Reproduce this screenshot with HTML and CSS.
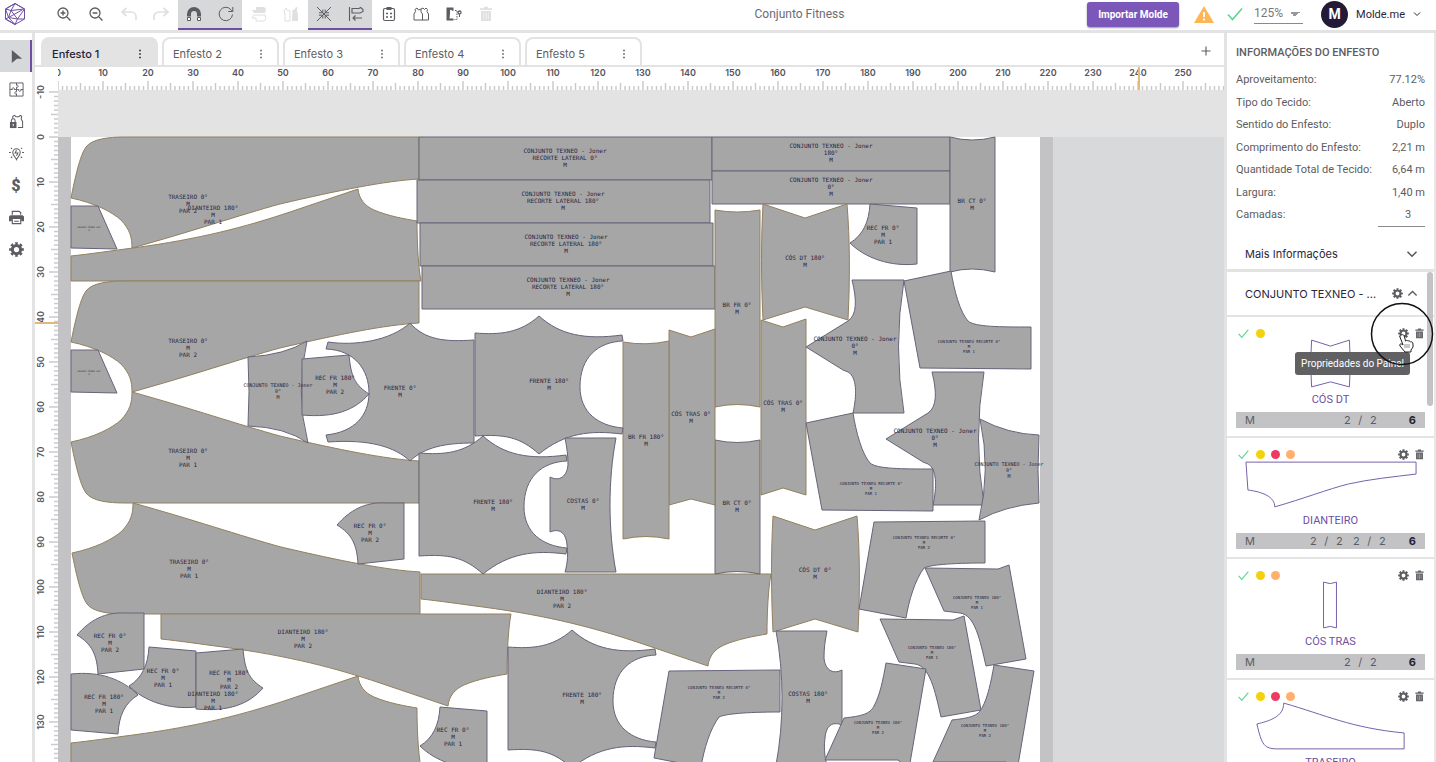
FILE: index.html
```html
<!DOCTYPE html>
<html lang="pt-BR">
<head>
  <meta charset="UTF-8" />
  <meta name="viewport" content="width=device-width, initial-scale=1.0" />
  <title>Molde.me - Conjunto Fitness</title>
  <link rel="stylesheet" href="styles.css">
</head>
<body>
  <svg class="sprite" aria-hidden="true">
    <symbol id="zoom-in" viewBox="0 0 16 16"><circle cx="7" cy="7" r="5" fill="none" stroke="currentColor" stroke-width="1.3"/><path d="M11 11l3.500 3.500M4.600 7h4.800M7 4.600v4.800" stroke="currentColor" stroke-width="1.400"/></symbol>
    <symbol id="zoom-out" viewBox="0 0 16 16"><circle cx="7" cy="7" r="5" fill="none" stroke="currentColor" stroke-width="1.300"/><path d="M11 11l3.500 3.500M4.600 7h4.800" stroke="currentColor" stroke-width="1.400"/></symbol>
    <symbol id="undo" viewBox="0 0 16 16"><path d="M5.500 2L1 6l4.500 4M1.500 6H10c3 0 5 2 5 4.500V14" fill="none" stroke="currentColor" stroke-width="1.700"/></symbol>
    <symbol id="redo" viewBox="0 0 16 16"><path d="M10.500 2L15 6l-4.500 4M14.500 6H6c-3 0-5 2-5 4.500V14" fill="none" stroke="currentColor" stroke-width="1.700"/></symbol>
    <symbol id="magnet" viewBox="0 0 16 16"><path d="M3 10.500V8a5 5 0 0 1 10 0v2.500" fill="none" stroke="currentColor" stroke-width="4"/><path d="M1.500 11.500h3v3h-3zM11.500 11.500h3v3h-3z" fill="#fff" stroke="currentColor"/></symbol>
    <symbol id="rotate" viewBox="0 0 16 16"><path d="M14.500 8.500A6.700 6.700 0 1 1 12.800 3.500L14.500 5.300M14.800 1v4.500H10.300" fill="none" stroke="currentColor" stroke-width="1"/></symbol>
    <symbol id="flip-v" viewBox="0 0 16 16"><path d="M5 1h8l2 2-1 4H3L1 4h4z" fill="currentColor"/><path d="M5 15h8l2-2-1-4H3l-2 3h4z" fill="none" stroke="currentColor"/></symbol>
    <symbol id="flip-h" viewBox="0 0 16 16"><path d="M7 15H2V8L1 5l2-3 1 2 3 1z" fill="none" stroke="currentColor"/><path d="M9 15h6V8l-1-3 .500-4-2 .500-1 2-2 .500z" fill="currentColor"/></symbol>
    <symbol id="collapse" viewBox="0 0 16 16"><path d="M1 1l14 14M15 1L1 15" stroke="currentColor" stroke-width="1"/><path d="M6.800 3.500v3.300H3M9.200 3.500v3.300H13M6.800 12.500V9.200H3M9.200 12.500V9.200H13" fill="none" stroke="currentColor" stroke-width="1"/></symbol>
    <symbol id="align" viewBox="0 0 16 16"><path d="M1.500 1v14M4 2.500h7l1.500-1 2.500 2v2l-3 1.500H4zM5 12h9M7.500 9.500L5 12l2.500 2.500" fill="none" stroke="currentColor" stroke-width="1.100"/></symbol>
    <symbol id="clipboard" viewBox="0 0 16 16"><rect x="2.500" y="2.500" width="11" height="12" rx="1.500" fill="none" stroke="currentColor" stroke-width="1.200"/><path d="M5.500 1h5v3h-5z" fill="currentColor"/><path d="M5 7.500h2M5 11h2M9 7.500h2M9 11h2" stroke="currentColor" stroke-width="1.500"/></symbol>
    <symbol id="vests" viewBox="0 0 16 16"><path d="M1 14V8l1.500-2.500-.500-2 2-1.500 1.500 2L8 3l2-1 1.500 1.500L13 2l1.500 1.500-.500 2L15.500 8v6zM8 3v3l1.500 2v6" fill="none" stroke="currentColor" stroke-width="1"/></symbol>
    <symbol id="mirror" viewBox="0 0 16 16"><path d="M.500 1.500H7.500v13H.500zM3.500 12.500h4V5l-1.500-.500-1-1-1 1v3z" fill="currentColor" fill-rule="evenodd"/><path d="M9 4.500h2v9H8.500" fill="none" stroke="currentColor" stroke-dasharray="1.500 1"/><circle cx="13.500" cy="6.500" r="1.500" fill="none" stroke="currentColor" stroke-width="1.300"/><path d="M13.500 8v3" stroke="currentColor"/></symbol>
    <symbol id="trash" viewBox="0 0 16 16"><path d="M6 .800h4v1.400h4v1.800H2V2.200h4zM3 5h10v10H3z" fill="currentColor"/><path d="M5.700 6.500v7M8 6.500v7M10.300 6.500v7" stroke="#fff" stroke-opacity=".6" stroke-width=".9"/></symbol>
    <symbol id="pointer" viewBox="0 0 16 16"><path d="M3 1l11 9.500H8.500L3 15z" fill="currentColor"/></symbol>
    <symbol id="puzzle" viewBox="0 0 16 16"><path d="M1 1h14v14H1zM8 1v2.500c2.500-1 2.500 3 0 2V8M8 15v-2.500c-2.500 1-2.500-3 0-2V8M1 8h2.500c-1-2.500 3-2.500 2 0H8M15 8h-2.500c1 2.500-3 2.500-2 0H8" fill="none" stroke="currentColor"/></symbol>
    <symbol id="lock" viewBox="0 0 16 16"><path d="M1 8.500h7V15H1z" fill="currentColor"/><path d="M2.500 8.500V7a2 2 0 0 1 4 0v1.500M4 5V2.500l2-1 1.500 1.500h3L12 1.500l1.500 1-.500 3 1.500 2.500v6.500h-5" fill="none" stroke="currentColor" stroke-width="1.100"/><path d="M4.500 10.500v2.500" stroke="#fff"/></symbol>
    <symbol id="bulb" viewBox="0 0 16 16"><path d="M8 14.500C7 12 4 10 4 7a4 4 0 0 1 8 0c0 3-3 5-4 7.500zM8 4.500L6.500 7.500h3L8 10.500M0 7h2M14 7h2M2 2l1.200 1M14 2l-1.200 1M2 12.500l1.500-1M14 12.500l-1.500-1" fill="none" stroke="currentColor" stroke-width="1.100"/></symbol>
    <symbol id="print" viewBox="0 0 16 16"><path d="M1.500 5.500h13L16 7v5h-3V9.500H3V12H0V7z" fill="currentColor"/><path d="M3.500 5V1.500h7.500L12.500 3v2M3.500 9.500v5h9v-5M5.500 12h5" fill="none" stroke="currentColor" stroke-width="1.200"/></symbol>
    <symbol id="gear" viewBox="0 0 16 16"><circle cx="8" cy="8" r="4.400" fill="none" stroke="currentColor" stroke-width="3.200"/><circle cx="8" cy="8" r="6.400" fill="none" stroke="currentColor" stroke-width="2.800" pathLength="16" stroke-dasharray="1.100 .9" stroke-dashoffset=".55"/></symbol>
    <symbol id="check" viewBox="0 0 16 16"><path d="M1 8.500l4.500 5L15 2.500" fill="none" stroke="currentColor" stroke-width="1.700"/></symbol>
    <symbol id="chevron" viewBox="0 0 16 16"><path d="M2 5l6 6 6-6" fill="none" stroke="currentColor" stroke-width="2"/></symbol>
    <symbol id="dots" viewBox="0 0 4 12"><path d="M1.200 1.700h1.600v1.600H1.200zM1.200 5.200h1.600v1.600H1.200zM1.200 8.700h1.600v1.600H1.200z" fill="currentColor"/></symbol>
    <symbol id="plus" viewBox="0 0 16 16"><path d="M8 2v12M2 8h12" stroke="currentColor" stroke-width="1.500"/></symbol>
  </svg>

  <header class="topbar">
    <a class="logo" href="#" aria-label="Molde.me">
      <svg viewBox="0 0 24 24"><path d="M12 1.500L21.500 7v10L12 22.500 2.500 17V7zM12 1.500L21.500 7 8 8.500zM12 1.500L2.500 7 8 8.500 5.500 15.500 2.500 7M8 8.500L14.500 17 21.500 7M5.500 15.500l9 1.500L21.500 17M5.500 15.500L2.500 17 12 22.500l2.500-5.500M5.500 15.500L12 22.500M19 8l-13.500 7.500" fill="none" stroke="currentColor" stroke-width="1"/></svg>
    </a>
    <div class="toolbar">
      <div class="group">
        <button aria-label="Aumentar zoom"><svg><use href="#zoom-in"/></svg></button>
        <button aria-label="Diminuir zoom"><svg><use href="#zoom-out"/></svg></button>
      </div>
      <div class="group">
        <button disabled aria-label="Desfazer"><svg><use href="#undo"/></svg></button>
        <button disabled aria-label="Refazer"><svg><use href="#redo"/></svg></button>
      </div>
      <div class="group active">
        <button aria-label="Encaixe"><svg><use href="#magnet"/></svg></button>
        <button aria-label="Girar"><svg><use href="#rotate"/></svg></button>
      </div>
      <div class="group">
        <button disabled aria-label="Espelhar vertical"><svg><use href="#flip-v"/></svg></button>
        <button disabled aria-label="Espelhar horizontal"><svg><use href="#flip-h"/></svg></button>
      </div>
      <div class="group active">
        <button aria-label="Compactar"><svg><use href="#collapse"/></svg></button>
        <button aria-label="Alinhar"><svg><use href="#align"/></svg></button>
      </div>
      <div class="group">
        <button aria-label="Lista"><svg><use href="#clipboard"/></svg></button>
        <button aria-label="Moldes"><svg><use href="#vests"/></svg></button>
      </div>
      <div class="group">
        <button aria-label="Dobrar"><svg><use href="#mirror"/></svg></button>
        <button disabled aria-label="Excluir"><svg><use href="#trash"/></svg></button>
      </div>
    </div>
    <h1>Conjunto Fitness</h1>
    <button class="import">Importar Molde</button>
    <svg class="warning" viewBox="0 0 20 17"><path d="M10 0l10 17H0z" fill="#fcb653"/><path d="M10 6v5M10 12.500v2" stroke="#fff" stroke-width="1.800"/></svg>
    <svg class="saved"><use href="#check"/></svg>
    <select class="zoom" aria-label="Zoom"><option>125%</option></select>
    <button class="user"><span class="avatar">M</span>Molde.me<svg><use href="#chevron"/></svg></button>
  </header>

  <main>
    <nav class="sidebar">
      <button class="active" aria-label="Selecionar"><svg><use href="#pointer"/></svg></button>
      <button aria-label="Encaixe automático"><svg><use href="#puzzle"/></svg></button>
      <button aria-label="Bloquear"><svg><use href="#lock"/></svg></button>
      <button aria-label="Sugestões"><svg><use href="#bulb"/></svg></button>
      <button class="cost" aria-label="Custos">$</button>
      <button aria-label="Imprimir"><svg><use href="#print"/></svg></button>
      <button aria-label="Configurações"><svg><use href="#gear"/></svg></button>
    </nav>

    <section class="work">
      <div class="tabs">
        <div class="tab active"><a href="#">Enfesto 1</a><button aria-label="Opções"><svg><use href="#dots"/></svg></button></div>
        <div class="tab"><a href="#">Enfesto 2</a><button aria-label="Opções"><svg><use href="#dots"/></svg></button></div>
        <div class="tab"><a href="#">Enfesto 3</a><button aria-label="Opções"><svg><use href="#dots"/></svg></button></div>
        <div class="tab"><a href="#">Enfesto 4</a><button aria-label="Opções"><svg><use href="#dots"/></svg></button></div>
        <div class="tab"><a href="#">Enfesto 5</a><button aria-label="Opções"><svg><use href="#dots"/></svg></button></div>
        <button class="add" aria-label="Novo enfesto"><svg><use href="#plus"/></svg></button>
      </div>
      <div class="stage">
        <svg class="ruler-y" id="ruler-y"></svg>
        <svg class="ruler-x" id="ruler-x"></svg>
        <svg class="canvas">
          <rect width="100%" height="100%" fill="#e3e3e3"/>
          <g transform="translate(-58 -90)">
            <rect x="58" y="137" width="3000" height="2000" fill="#d8d9db"/>
            <rect x="58" y="137" width="995" height="2000" fill="#c3c3c6"/>
            <rect x="71" y="137" width="969" height="2000" fill="#fff"/>
            <g id="pieces"></g>
          </g>
        </svg>
      </div>
    </section>

    <aside class="panel">
      <section class="info">
        <h2>INFORMAÇÕES DO ENFESTO</h2>
        <dl>
          <div><dt>Aproveitamento:</dt><dd>77.12%</dd></div>
          <div><dt>Tipo do Tecido:</dt><dd>Aberto</dd></div>
          <div><dt>Sentido do Enfesto:</dt><dd>Duplo</dd></div>
          <div><dt>Comprimento do Enfesto:</dt><dd>2,21 m</dd></div>
          <div><dt>Quantidade Total de Tecido:</dt><dd>6,64 m</dd></div>
          <div><dt>Largura:</dt><dd>1,40 m</dd></div>
          <div><dt><label for="camadas">Camadas:</label></dt><dd><input id="camadas" type="text" value="3"></dd></div>
        </dl>
      </section>
      <button class="more">Mais Informações<svg><use href="#chevron"/></svg></button>

      <div class="list">
        <div class="model">
          <h3>CONJUNTO TEXNEO - ...</h3>
          <button aria-label="Configurar modelo"><svg><use href="#gear"/></svg></button>
          <button class="up" aria-label="Recolher"><svg><use href="#chevron"/></svg></button>
        </div>

        <article class="card">
          <div class="head">
            <svg class="ok"><use href="#check"/></svg><i class="dot yellow"></i>
            <button class="first" aria-label="Propriedades do Painel"><svg><use href="#gear"/></svg></button>
            <button aria-label="Excluir"><svg><use href="#trash"/></svg></button>
          </div>
          <svg class="preview" viewBox="0 0 190 49"><path d="M76 1l19 6 19-6q2 24 0 47l-19-5-19 5q-2-24 0-47z"/></svg>
          <h4>CÓS DT</h4>
          <div class="sizes"><span>M</span><span class="count"><i>2</i><i>/</i><i>2</i></span><b>6</b></div>
          <div class="tooltip" role="tooltip">Propriedades do Painel</div>
          <svg class="spot" viewBox="0 0 64 64">
            <circle cx="32" cy="32" r="30.500" fill="none" stroke="#111" stroke-width="1.500"/>
            <path d="M31 33c2-1 3 0 3.500 2l1 4c1-1 2-.500 2.500 0 1-.500 2 0 2.500 1 1-.500 2.500 0 2.500 2v3l-2 3v2h-6l-5-6c-1-2 1-3 3-1l-3-8c0-1 0-2 1-2z" fill="#fff" stroke="#222"/>
            <path d="M35 42v4M37 42v4M39 42v4" stroke="#777" stroke-width=".8"/>
          </svg>
        </article>

        <article class="card">
          <div class="head">
            <svg class="ok"><use href="#check"/></svg><i class="dot yellow"></i><i class="dot red"></i><i class="dot orange"></i>
            <button class="first" aria-label="Propriedades do Painel"><svg><use href="#gear"/></svg></button>
            <button aria-label="Excluir"><svg><use href="#trash"/></svg></button>
          </div>
          <svg class="preview" viewBox="0 0 190 49"><path d="M10 2h171v12c-24 3-46 5-68 10-20 5-46 15-74 23 0-10-12-15-27-17z"/></svg>
          <h4>DIANTEIRO</h4>
          <div class="sizes"><span>M</span><span class="count double"><i>2</i><i>/</i><i>2</i><i></i><i>2</i><i>/</i><i>2</i></span><b>6</b></div>
        </article>

        <article class="card">
          <div class="head">
            <svg class="ok"><use href="#check"/></svg><i class="dot yellow"></i><i class="dot orange"></i>
            <button class="first" aria-label="Propriedades do Painel"><svg><use href="#gear"/></svg></button>
            <button aria-label="Excluir"><svg><use href="#trash"/></svg></button>
          </div>
          <svg class="preview" viewBox="0 0 190 49"><path d="M88 1q7 3 13 0v46q-6-3-13 0z"/></svg>
          <h4>CÓS TRAS</h4>
          <div class="sizes"><span>M</span><span class="count"><i>2</i><i>/</i><i>2</i></span><b>6</b></div>
        </article>

        <article class="card">
          <div class="head">
            <svg class="ok"><use href="#check"/></svg><i class="dot yellow"></i><i class="dot red"></i><i class="dot orange"></i>
            <button class="first" aria-label="Propriedades do Painel"><svg><use href="#gear"/></svg></button>
            <button aria-label="Excluir"><svg><use href="#trash"/></svg></button>
          </div>
          <svg class="preview" viewBox="0 0 190 49"><path d="M48 1c42 12 68 25 121 30v16H42c-14 0-16-4-21-25 12-3 27-7 27-21z"/></svg>
          <h4>TRASEIRO</h4>
          <div class="sizes"><span>M</span><span class="count double"><i>2</i><i>/</i><i>2</i><i></i><i>2</i><i>/</i><i>2</i></span><b>6</b></div>
        </article>
        <div class="thumb"></div>
      </div>
    </aside>
  </main>
  <script src="script.js"></script>
</body>
</html>
```
FILE: styles.css
```css
* {
  box-sizing: border-box;
}
body {
  margin: 0;
  height: 100vh;
  display: flex;
  flex-direction: column;
  overflow: hidden;
  font-family: Roboto, "Liberation Sans", sans-serif;
  font-size: 11px;
  color: #5c5c62;
  background: white;
}
h1, h2, h3, h4, dl, dd {
  margin: 0;
  font-weight: normal;
}
button {
  display: flex;
  align-items: center;
  justify-content: center;
  padding: 0;
  border: none;
  background: none;
  color: inherit;
  font-family: inherit;
  cursor: pointer;
}
a {
  color: inherit;
  text-decoration: none;
}
.sprite {
  position: absolute;
  width: 0;
  height: 0;
}

/* top bar */
.topbar {
  display: flex;
  align-items: center;
  flex: none;
  height: 33px;
  padding: 0 15px 0 3px;
  border-bottom: 3px solid #e3e3e3;
}
.logo {
  display: flex;
  width: 45px;
  margin-bottom: 2px;
  color: #6e4fa3;
}
.logo svg {
  width: 24px;
  height: 24px;
}
.toolbar {
  display: flex;
  gap: 1px;
}
.group {
  display: flex;
}
.group button {
  width: 32px;
  height: 30px;
  padding-bottom: 2px;
}
.group svg {
  width: 16px;
  height: 16px;
}
.group button:disabled {
  color: #e0e0e0;
}
.group.active {
  background: #d7d8da;
  box-shadow: inset 0 -2px #6e4fa3;
}
h1 {
  flex: 1;
  padding-left: 10px;
  padding-bottom: 2px;
  text-align: center;
  font-size: 12px;
  color: #6c6b76;
}
.import {
  width: 92px;
  height: 25px;
  margin-bottom: 2px;
  border-radius: 3px;
  background: #7b57b9;
  box-shadow: 0 1px 2px rgba(0,0,0,0.4);
  color: white;
  font-size: 10px;
  font-weight: bold;
}
.warning {
  width: 20px;
  height: 17px;
  margin-left: 15px;
  margin-bottom: 2px;
}
.saved {
  width: 16px;
  height: 16px;
  margin-left: 13px;
  margin-bottom: 2px;
  color: #5fd693;
}
.zoom {
  width: 49px;
  height: 20px;
  margin-left: 11px;
  margin-bottom: 3px;
  padding: 0;
  border: none;
  border-bottom: 1px solid #8a8a8a;
  appearance: none;
  background: linear-gradient(to bottom right, #999 50%, transparent 50%) 41px 8px / 5px 5px no-repeat, linear-gradient(to bottom left, #999 50%, transparent 50%) 36px 8px / 5px 5px no-repeat;
  color: #77767d;
  font-family: Roboto, sans-serif;
  font-size: 12px;
}
.user {
  margin-left: 18px;
  margin-bottom: 2px;
  font-size: 11px;
  color: #2b2638;
}
.user svg {
  width: 8px;
  height: 8px;
  margin-left: 8px;
}
.avatar {
  width: 27px;
  height: 27px;
  margin-right: 8px;
  border-radius: 50%;
  background: #231a38;
  color: white;
  font-size: 14px;
  font-weight: bold;
  line-height: 27px;
}

main {
  flex: 1;
  min-height: 0;
  display: grid;
  grid-template-columns: 35px 1fr 212px;
}

/* left tools */
.sidebar {
  padding-top: 7px;
  border-right: 3px solid #e3e3e3;
}
.sidebar button {
  width: 32px;
  height: 32px;
}
.sidebar svg {
  width: 15px;
  height: 15px;
}
.sidebar .active {
  margin-bottom: 1px;
  background: #d7d8da;
  box-shadow: inset -2px 0 #6e4fa3;
}
.sidebar .cost {
  font-size: 16px;
  font-weight: 900;
}

/* tabs */
.work {
  display: flex;
  flex-direction: column;
  min-width: 0;
}
.tabs {
  display: flex;
  align-items: flex-end;
  gap: 4px;
  flex: none;
  height: 34px;
  padding: 0 12px 0 6px;
  border-bottom: 2px solid #e3e3e3;
}
.tab {
  display: flex;
  align-items: center;
  justify-content: space-between;
  width: 117px;
  height: 28px;
  padding: 3px 14px 0 9px;
  border: 2px solid #e3e3e3;
  border-bottom: none;
  border-radius: 8px 8px 0 0;
  font-family: Inter, sans-serif;
  font-size: 11px;
}
.tab.active {
  background: #e3e3e3;
  color: #231f35;
  font-weight: 500;
}
.tab svg {
  width: 4px;
  height: 12px;
}
.add {
  margin: 0 0 8px auto;
}
.add svg {
  width: 12px;
  height: 12px;
}

/* rulers and canvas */
.stage {
  flex: 1;
  min-height: 0;
  display: grid;
  grid-template-columns: 23px 1fr;
  grid-template-rows: 23px 1fr;
}
.stage svg {
  width: 100%;
  height: 100%;
  min-height: 0;
  overflow: hidden;
}
.ruler-x {
  grid-column: 2;
}
.ruler-y {
  grid-column: 1;
  grid-row: 1 / 3;
}
.ruler-x line, .ruler-y line {
  stroke: #cbcbcb;
  stroke-width: 1.5;
}
.ruler-x .mark, .ruler-y .mark {
  stroke: #dfb97d;
  stroke-width: 2;
}
.ruler-x text, .ruler-y text {
  font-family: Inter, sans-serif;
  font-size: 9px;
  font-weight: 600;
  fill: #55535f;
  text-anchor: middle;
}
.piece {
  fill: #a6a6a6;
  stroke: #66647a;
  stroke-width: 1;
}
.piece.fold {
  stroke: #93805f;
}
.label {
  font-family: "DejaVu Sans Mono", monospace;
  font-size: 6px;
  fill: #27243d;
  text-anchor: middle;
}
.label.medium {
  font-size: 5px;
}
.label.small {
  font-size: 4px;
}
.label.tiny {
  font-size: 2px;
}

/* right panel */
.panel {
  display: flex;
  flex-direction: column;
  min-height: 0;
  border-left: 3px solid #e3e3e3;
  border-right: 2px solid #e8e8e8;
}
.info {
  padding: 12px 9px 0;
}
.info h2 {
  font-size: 11px;
  font-weight: 500;
  line-height: 16px;
}
.info dl {
  display: flex;
  flex-direction: column;
  justify-content: space-between;
  height: 154px;
  margin-top: 10px;
}
.info dl div {
  display: flex;
  justify-content: space-between;
  line-height: 18px;
}
.info input {
  width: 47px;
  height: 20px;
  margin-bottom: -2px;
  padding: 0 0 3px 13px;
  border: none;
  border-bottom: 1px solid #8a8a8a;
  color: inherit;
  font-family: inherit;
  font-size: 11px;
  text-align: center;
}
.more {
  flex: none;
  justify-content: space-between;
  height: 44px;
  padding: 14px 16px 0 18px;
  font-family: Inter, sans-serif;
  font-size: 11px;
  color: #2b2638;
}
.more svg {
  width: 12px;
  height: 12px;
  color: #55555c;
}
.list {
  flex: 1;
  min-height: 0;
  position: relative;
  overflow: hidden;
  border-top: 3px solid #e3e3e3;
}
.model {
  display: flex;
  align-items: center;
  height: 45px;
  padding: 0 16px 0 18px;
  border-bottom: 2px solid #e3e3e3;
}
.model h3 {
  flex: 1;
  font-family: Inter, sans-serif;
  font-size: 11px;
  color: #2b2638;
}
.model button {
  margin-left: 4px;
}
.model svg, .head svg {
  width: 11px;
  height: 11px;
}
.model .up {
  transform: rotate(180deg);
}
.card {
  position: relative;
  height: 121px;
  padding: 11px 9px 0;
  border-bottom: 2px solid #e3e3e3;
}
.head {
  display: flex;
  align-items: center;
  height: 11px;
  padding-left: 2px;
}
.head .ok {
  margin-right: 7px;
  color: #5fd693;
}
.head .first {
  margin-left: auto;
}
.head button + button {
  margin-left: 5px;
}
.dot {
  width: 9px;
  height: 9px;
  margin-right: 6px;
  border-radius: 50%;
}
.yellow {
  background: #f3d20d;
}
.red {
  background: #f03a63;
}
.orange {
  background: #ffb06e;
}
.preview {
  display: block;
  width: 100%;
  height: 49px;
  fill: none;
  stroke: #7660a8;
}
h4 {
  font-size: 11px;
  line-height: 24px;
  text-align: center;
  color: #6e4fa3;
}
.sizes {
  display: flex;
  align-items: center;
  height: 16px;
  padding: 0 9px;
  background: #c3c3c6;
  font-family: Inter, sans-serif;
  font-size: 11px;
}
.count {
  display: flex;
  margin-left: auto;
  margin-right: 29px;
}
.count.double {
  margin-right: 20px;
}
.count i {
  width: 13px;
  font-style: normal;
  text-align: center;
}
.count i:empty {
  width: 4px;
}
.sizes b {
  color: #231f35;
}
.tooltip {
  position: absolute;
  top: 35px;
  right: 24px;
  padding: 0 6px;
  border-radius: 3px;
  background: #616163;
  color: white;
  font-size: 10px;
  line-height: 23px;
  white-space: nowrap;
}
.spot {
  position: absolute;
  top: -15px;
  right: 0;
  width: 64px;
  height: 64px;
  z-index: 1;
}
.thumb {
  position: absolute;
  top: 0;
  right: 1px;
  width: 6px;
  height: 134px;
  border-radius: 3px;
  background: #c3c3c6;
}
```
FILE: script.js
```js
const NS = "http://www.w3.org/2000/svg";
const CM = 4.5;

function add(parent, tag, attrs, text) {
  let el = document.createElementNS(NS, tag);
  for (let key in attrs) el.setAttribute(key, attrs[key]);
  if (text !== undefined) el.textContent = text;
  parent.appendChild(el);
  return el;
}

// Rulers: one tick per cm, longer every 5 and 10
function tickSize(cm) {
  return cm % 10 === 0 ? 9 : cm % 5 === 0 ? 7 : 4;
}

let rulerX = document.getElementById("ruler-x");
let rulerWidth = rulerX.getBoundingClientRect().width;
for (let cm = 0; cm * CM < rulerWidth; cm++) {
  let x = cm * CM;
  add(rulerX, "line", { x1: x, x2: x, y1: 23 - tickSize(cm), y2: 23 });
  if (cm % 10 === 0 && x + 10 < rulerWidth) add(rulerX, "text", { x: x, y: 9 }, cm);
}
add(rulerX, "line", { x1: 1081, x2: 1081, y1: 0, y2: 23, class: "mark" });

let rulerY = document.getElementById("ruler-y");
let rulerHeight = rulerY.getBoundingClientRect().height;
for (let cm = -10; 70 + cm * CM < rulerHeight; cm++) {
  let y = 70 + cm * CM;
  add(rulerY, "line", { x1: 23 - tickSize(cm), x2: 23, y1: y, y2: y });
  if (cm % 10 === 0) add(rulerY, "text", { transform: `translate(9 ${y}) rotate(-90)` }, cm);
}
add(rulerY, "line", { x1: 0, x2: 23, y1: 256, y2: 256, class: "mark" });

// Outlines of the pattern pieces
const shapes = {
  traseiro: "M71 198C75 178 80 155 86 147C92 139 108 137 125 137H419V179C385 181 340 190 280 204C240 215 190 232 132 248C132 237 130 230 121 220C112 212 95 203 71 198Z",
  dianteiro: "M71 256C90 254 110 251 133 248C200 239 245 227 290 212L358 189C359 199 365 206 374 210C388 216 405 219 417 221C417 240 418 265 421 281H71Z",
  bolso: "M71 206H98L117 249L71 248Z",
  cosDt: "M763 204L805 218L847 204C850 240 850 280 848 320L805 307L763 320C761 280 761 240 763 204Z",
  recFr1: "M870 204L917 208V264C890 267 865 258 850 243C863 235 869 222 870 204Z",
  recFr2: "M337 525C350 510 365 502 385 503H404V559L358 564C357 545 352 534 337 525Z",
  recFr180: "M302 359L349 355C351 377 355 385 369 394C355 410 335 418 302 415Z",
  frente180: "M475 333C500 335 520 333 539 316C560 335 585 340 622 335L623 341C598 342 580 357 580 387C580 412 598 426 623 428L622 434C590 430 565 433 539 454C520 437 505 434 475 436Z",
  costas: "M565 438H616C608 480 608 530 616 572H565C568 562 568 552 567 545C566 533 560 528 550 532V477C560 482 567 476 568 465C568 455 567 448 565 438Z",
  camisa: "M852 280H904Q893 347 904 413H853C857 395 857 377 848 372L843 370L806 347L848 321C857 315 857 300 852 280Z",
  recorte1: "M904 281L951 271C954 290 960 312 968 321C975 327 1000 327 1031 327V369L920 368Z",
  recorte2: "M874 522L985 521V563C950 563 930 565 924 568C915 580 909 600 906 618L859 609Z",
  manga1: "M925 568L998 569L1009 565L1026 659L986 666C980 640 975 615 960 613L944 611Z",
  manga2: "M886 663L926 669L909 769L898 760H825L844 718C862 716 870 714 874 706C880 695 883 680 886 663Z"
};

// [outline, transform, fold]
const pieces = [
  [shapes.traseiro, "", 1],
  [shapes.dianteiro, "", 1],
  [shapes.traseiro, "translate(0 144)", 1],
  [shapes.traseiro, "matrix(1 0 0 -1 0 640)", 1],
  [shapes.traseiro, "matrix(1 0 0 -1 1 751)", 1],
  [shapes.dianteiro, "matrix(1 0 0 -1 90 895)", 1],
  [shapes.dianteiro, "matrix(1 0 0 -1 350 855)", 1],
  [shapes.dianteiro, "translate(0 487)", 1],
  [shapes.bolso, ""],
  [shapes.bolso, "translate(0 144)"],
  ["M419 137H712V180H419Z", ""],
  ["M417 180H710V223H417Z", ""],
  ["M420 223H713V266H420Z", ""],
  ["M422 266H715V309H422Z", ""],
  ["M712 137H950V171H712Z", ""],
  ["M712 171H950V204H712Z", ""],
  ["M950 137Q972 143 995 137V272Q972 266 950 272Z", ""],
  ["M715 210Q737 214 760 210V407Q737 402 715 407Z", "", 1],
  ["M715 440Q737 445 760 440V574Q737 569 715 574Z", ""],
  ["M761 320L783 327L806 319V495L783 488L761 495Z", "", 1],
  ["M669 330L691 337L715 329V505L691 499L669 505Z", "", 1],
  ["M623 342Q646 346 669 341V539Q646 534 623 539Z", "", 1],
  [shapes.cosDt, "", 1],
  [shapes.cosDt, "translate(10 312)", 1],
  ["M248 357Q285 355 307 341Q295 392 308 443Q285 427 248 426Q250 392 248 357Z", ""],
  ["M328 342C355 346 390 341 410 323C425 340 445 342 474 340V443C445 443 425 447 410 461C395 447 370 439 328 442L326 435C355 432 369 415 369 393C369 370 355 350 326 349Z", ""],
  [shapes.frente180, ""],
  [shapes.frente180, "translate(-56 120)"],
  [shapes.frente180, "translate(33 314)"],
  [shapes.costas, ""],
  [shapes.costas, "matrix(-1 0 0 1 1392 193)"],
  [shapes.recFr1, ""],
  [shapes.recFr1, "translate(-721 443)"],
  [shapes.recFr1, "translate(-430 503)"],
  [shapes.recFr2, ""],
  [shapes.recFr2, "translate(-260 110)"],
  [shapes.recFr180, ""],
  [shapes.recFr180, "translate(-106 294)"],
  ["M71 674C100 671 122 679 138 695C125 703 119 715 118 734L71 730Z", ""],
  [shapes.camisa, ""],
  [shapes.camisa, "translate(80 92)"],
  ["M980 419Q1008 434 1039 435Q1037 470 1039 503Q1005 506 979 520Q991 470 980 419Z", ""],
  [shapes.recorte1, ""],
  [shapes.recorte1, "translate(-98 142)"],
  [shapes.recorte2, ""],
  [shapes.recorte2, "translate(-205 149)"],
  [shapes.manga1, ""],
  [shapes.manga1, "translate(-45 51)"],
  [shapes.manga2, ""],
  [shapes.manga2, "translate(108 2)"]
];

// [x, baseline of first line, lines, size class]
const joner = "CONJUNTO TEXNEO - Joner";
const recorte = "CONJUNTO TEXNEO RECORTE 0°";
const texneo = "CONJUNTO TEXNEO 180°";
const labels = [
  [188, 199, ["TRASEIRO 0°", "M", "PAR 2"]],
  [213, 210, ["DIANTEIRO 180°", "M", "PAR 1"]],
  [188, 343, ["TRASEIRO 0°", "M", "PAR 2"]],
  [188, 453, ["TRASEIRO 0°", "M", "PAR 1"]],
  [189, 564, ["TRASEIRO 0°", "M", "PAR 1"]],
  [303, 634, ["DIANTEIRO 180°", "M", "PAR 2"]],
  [562, 594, ["DIANTEIRO 180°", "M", "PAR 2"]],
  [213, 696, ["DIANTEIRO 180°", "M", "PAR 1"]],
  [565, 153, [joner, "RECORTE LATERAL 0°", "M"]],
  [563, 196, [joner, "RECORTE LATERAL 180°", "M"]],
  [566, 239, [joner, "RECORTE LATERAL 180°", "M"]],
  [568, 282, [joner, "RECORTE LATERAL 180°", "M"]],
  [831, 148, [joner, "180°", "M"]],
  [831, 182, [joner, "0°", "M"]],
  [972, 203, ["BR CT 0°", "M"]],
  [737, 307, ["BR FR 0°", "M"]],
  [737, 505, ["BR CT 0°", "M"]],
  [783, 405, ["CÓS TRAS 0°", "M"]],
  [691, 416, ["CÓS TRAS 0°", "M"]],
  [646, 439, ["BR FR 180°", "M"]],
  [805, 260, ["CÓS DT 180°", "M"]],
  [815, 572, ["CÓS DT 0°", "M"]],
  [278, 387, [joner, "0°", "M"], "medium"],
  [400, 390, ["FRENTE 0°", "M"]],
  [549, 383, ["FRENTE 180°", "M"]],
  [493, 504, ["FRENTE 180°", "M"]],
  [582, 697, ["FRENTE 180°", "M"]],
  [583, 503, ["COSTAS 0°", "M"]],
  [808, 696, ["COSTAS 180°", "M"]],
  [883, 230, ["REC FR 0°", "M", "PAR 1"]],
  [163, 673, ["REC FR 0°", "M", "PAR 1"]],
  [453, 732, ["REC FR 0°", "M", "PAR 1"]],
  [370, 528, ["REC FR 0°", "M", "PAR 2"]],
  [110, 638, ["REC FR 0°", "M", "PAR 2"]],
  [335, 380, ["REC FR 180°", "M", "PAR 2"]],
  [229, 675, ["REC FR 180°", "M", "PAR 2"]],
  [104, 699, ["REC FR 180°", "M", "PAR 1"]],
  [855, 341, [joner, "0°", "M"]],
  [935, 433, [joner, "0°", "M"]],
  [1009, 466, [joner, "0°", "M"], "medium"],
  [969, 343, [recorte, "M", "PAR 1"], "small"],
  [871, 485, [recorte, "M", "PAR 1"], "small"],
  [924, 539, [recorte, "M", "PAR 2"], "small"],
  [719, 689, [recorte, "M", "PAR 2"], "small"],
  [977, 599, [texneo, "M", "PAR 1"], "small"],
  [932, 649, [texneo, "M", "PAR 1"], "small"],
  [878, 724, [texneo, "M", "PAR 2"], "small"],
  [985, 727, [texneo, "M", "PAR 2"], "small"],
  [89, 228, [texneo, "M"], "tiny"],
  [89, 372, [texneo, "M"], "tiny"]
];

const lineHeights = { medium: 6, small: 5, tiny: 3 };
let layer = document.getElementById("pieces");

pieces.forEach(([d, transform, fold]) => {
  add(layer, "path", { d: d, transform: transform, class: fold ? "piece fold" : "piece" });
});

labels.forEach(([x, y, lines, size]) => {
  let text = add(layer, "text", { class: "label " + (size || "") });
  lines.forEach((line, i) => {
    add(text, "tspan", { x: x, y: y + i * (lineHeights[size] || 7) }, line);
  });
});
```
